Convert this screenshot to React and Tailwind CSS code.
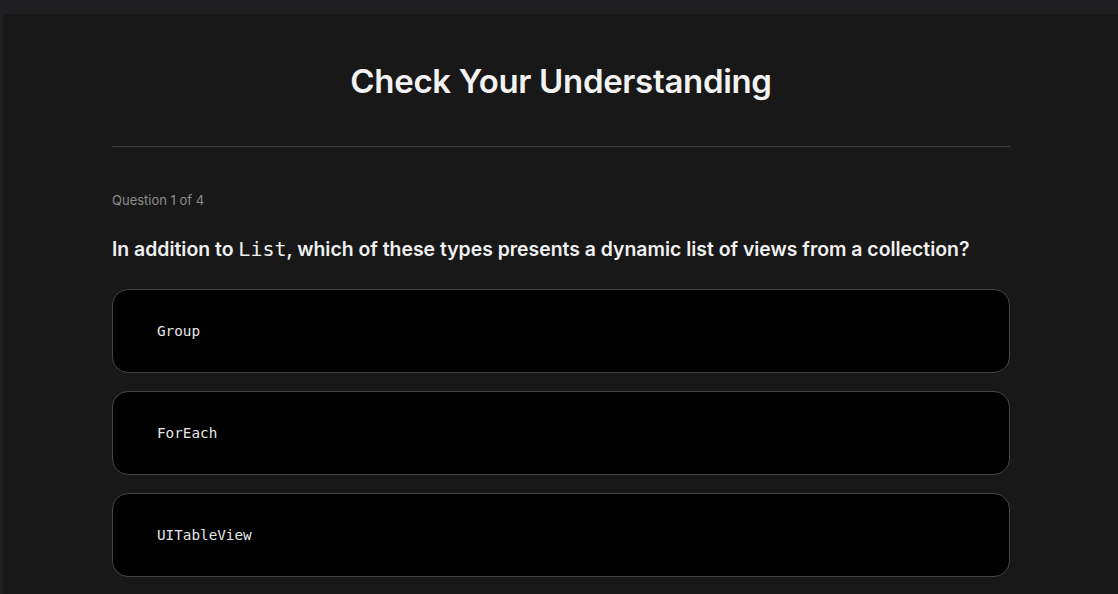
const options = ["Group", "ForEach", "UITableView"];

export default function App() {
  return (
    <div className="min-h-screen bg-[#1f1f21] pt-[14px] pl-[3px] font-['Inter',sans-serif]">
      <section className="min-h-[580px] bg-[#181818] pl-[109px] pr-[108px]">
        <div className="mx-auto max-w-[898px]">
          <div className="border-b border-[#434343] pt-[47px] pb-[45px] text-center">
            <h1 className="text-[33px] font-semibold leading-[40px] tracking-[-0.01em] text-[#f2f2f2]">
              Check Your Understanding
            </h1>
          </div>
          <p className="mt-[45px] text-[13px] leading-[16px] text-[#8c8c8c]">
            Question 1 of 4
          </p>
          <h2 className="mt-[27px] text-[19.4px] font-semibold leading-[28px] text-[#f0f0f0]">
            In addition to{" "}
            <code className="font-['DejaVu_Sans_Mono',monospace] text-[20px] font-normal">
              List
            </code>
            , which of these types presents a dynamic list of views from a
            collection?
          </h2>
          <div className="mt-[26px] flex flex-col gap-[18px]">
            {options.map((opt) => (
              <button
                key={opt}
                className="flex h-[84px] items-center rounded-[16px] border border-[#454545] bg-black px-[44px] pt-[2px] text-left"
              >
                <span className="font-['DejaVu_Sans_Mono',monospace] text-[14.3px] text-[#e6e6e6]">
                  {opt}
                </span>
              </button>
            ))}
          </div>
        </div>
      </section>
    </div>
  );
}
